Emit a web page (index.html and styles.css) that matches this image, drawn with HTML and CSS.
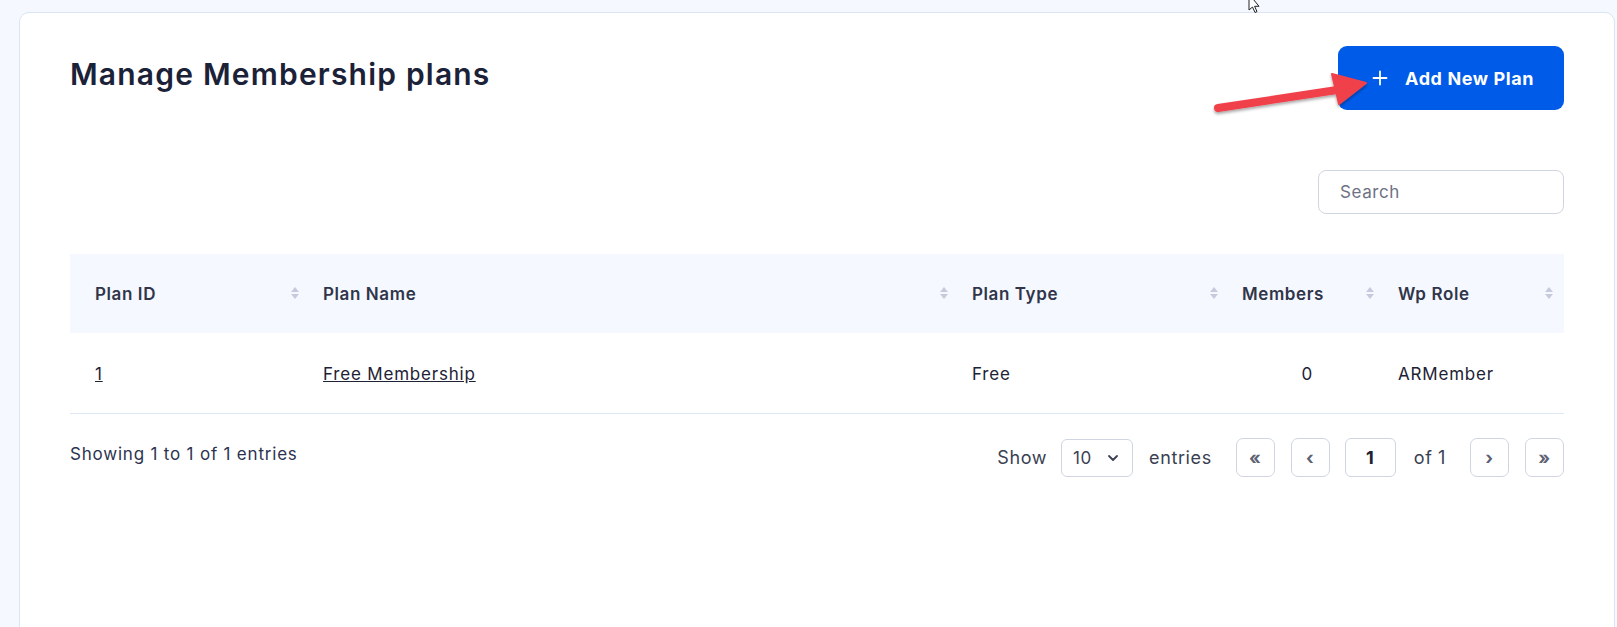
FILE: index.html
```html
<!DOCTYPE html>
<html lang="en">
<head>
    <meta charset="UTF-8">
    <title>Manage Membership plans</title>
    <link rel="stylesheet" href="styles.css">
</head>
<body>
<div class="page">
    <div class="card">
        <!--标题 + 新建按钮-->
        <div class="card_head">
            <h1 class="page_title">Manage Membership plans</h1>
            <button class="btn_add" type="button">
                <svg class="btn_plus" width="16" height="16" viewBox="0 0 16 16"><path d="M8 1.5 V14.5 M1.5 8 H14.5" stroke="#fff" stroke-width="1.8" stroke-linecap="round"/></svg>
                <span>Add New Plan</span>
            </button>
        </div>

        <!--搜索-->
        <div class="search_bar">
            <input type="text" class="search_input" placeholder="Search">
        </div>

        <!--表格-->
        <div class="plan_table">
            <div class="tr th_row">
                <div class="th">Plan ID<i class="sort"></i></div>
                <div class="th">Plan Name<i class="sort"></i></div>
                <div class="th">Plan Type<i class="sort"></i></div>
                <div class="th">Members<i class="sort"></i></div>
                <div class="th">Wp Role<i class="sort"></i></div>
            </div>
            <div class="tr td_row">
                <div class="td"><a href="#">1</a></div>
                <div class="td"><a href="#">Free Membership</a></div>
                <div class="td">Free</div>
                <div class="td td_num">0</div>
                <div class="td">ARMember</div>
            </div>
        </div>

        <!--分页-->
        <div class="table_foot">
            <div class="info">Showing 1 to 1 of 1 entries</div>
            <div class="pager">
                <span>Show</span>
                <div class="page_size">
                    <span>10</span>
                    <svg width="14" height="14" viewBox="0 0 14 14"><path d="M3 5 L7 9 L11 5" fill="none" stroke="#3a3f52" stroke-width="1.8" stroke-linecap="round" stroke-linejoin="round"/></svg>
                </div>
                <span>entries</span>
                <span class="pbtn pbtn_first">&laquo;</span>
                <span class="pbtn">&lsaquo;</span>
                <span class="page_num">1</span>
                <span class="of">of 1</span>
                <span class="pbtn">&rsaquo;</span>
                <span class="pbtn">&raquo;</span>
            </div>
        </div>
    </div>

    <!--红色标注箭头-->
    <svg class="mark_arrow" width="170" height="60" viewBox="0 0 170 60">
        <defs>
            <filter id="sh" x="-20%" y="-50%" width="140%" height="200%">
                <feDropShadow dx="0" dy="2" stdDeviation="1.6" flood-color="#000" flood-opacity="0.35"/>
            </filter>
        </defs>
        <g filter="url(#sh)" fill="#f0414a" stroke="#f0414a">
            <line x1="13" y1="43" x2="132" y2="25" stroke-width="8" stroke-linecap="round"/>
            <polygon points="127,9 134,39 161,18" stroke-width="2" stroke-linejoin="round"/>
        </g>
    </svg>

    <!--鼠标指针-->
    <svg class="cursor" width="14" height="14" viewBox="0 0 14 14">
        <path d="M1 -6 L1 10 L4.5 7 L7 12.5 L9 11.6 L6.6 6.3 L11 6.3 Z" fill="#fff" stroke="#222" stroke-width="1"/>
    </svg>
</div>
</body>
</html>
```
FILE: styles.css
```css
*{
    margin: 0;
    padding: 0;
    box-sizing: border-box;
}
body{
    background-color: #f5f8fe;
    font-family: "Inter", "Noto Sans", sans-serif;
    color: #2c3148;
}
.page{
    position: relative;
    height: 627px;
    overflow: hidden;
    padding: 12px 2px 0 19px;
}
.card{
    background-color: #fff;
    border: 1px solid #dbe4f2;
    border-radius: 10px;
    height: 640px;
    padding: 33px 50px 0 50px;
}
.card_head{
    display: flex;
    justify-content: space-between;
    align-items: flex-start;
}
.page_title{
    margin-top: 10px;
    font-size: 30px;
    font-weight: 600;
    color: #1b2238;
    letter-spacing: 1.2px;
}
.btn_add{
    width: 226px;
    height: 64px;
    border: none;
    border-radius: 9px;
    background-color: #005be9;
    color: #fff;
    font-family: inherit;
    font-size: 18px;
    font-weight: 700;
    letter-spacing: 0.6px;
    display: flex;
    align-items: center;
    padding-left: 34px;
    gap: 17px;
}
.search_bar{
    display: flex;
    justify-content: flex-end;
    margin-top: 60px;
}
.search_input{
    width: 246px;
    height: 44px;
    border: 1px solid #cfd6e1;
    border-radius: 8px;
    padding-left: 21px;
    font-family: inherit;
    font-size: 17px;
    letter-spacing: 0.6px;
    color: #333;
}
.search_input::placeholder{
    color: #6e7284;
}
.plan_table{
    margin-top: 40px;
}
.tr{
    display: grid;
    grid-template-columns: 239px 649px 270px 156px 179px;
}
.th_row{
    background-color: #f5f8fe;
    height: 79px;
}
.td_row{
    height: 81px;
    padding-top: 1px;
    border-bottom: 1px solid #dfe8f6;
}
.th, .td{
    display: flex;
    align-items: center;
    padding-left: 14px;
    font-size: 17px;
}
.th:first-child, .td:first-child{
    padding-left: 25px;
}
.th{
    position: relative;
    font-weight: 600;
    color: #30354a;
    letter-spacing: 0.6px;
}
.td{
    color: #1e2235;
    letter-spacing: 0.8px;
}
.td a{
    color: #1e2235;
}
.td_num{
    justify-content: flex-end;
    padding-right: 71px;
}
/*排序的上下小三角*/
.sort{
    position: absolute;
    right: 10px;
    top: 33px;
    width: 8px;
    height: 12px;
}
.sort::before, .sort::after{
    content: "";
    position: absolute;
    left: 0;
    border-left: 4px solid transparent;
    border-right: 4px solid transparent;
}
.sort::before{
    top: 0;
    border-bottom: 5px solid #c7cadd;
}
.sort::after{
    bottom: 0;
    border-top: 5px solid #c7cadd;
}
.table_foot{
    display: flex;
    justify-content: space-between;
    align-items: center;
    margin-top: 24px;
}
.info{
    font-size: 17px;
    letter-spacing: 0.8px;
    color: #2c3350;
    margin-top: -7px;
}
.pager{
    display: flex;
    align-items: center;
    font-size: 18px;
    letter-spacing: 0.6px;
    color: #3a3f52;
}
.page_size{
    width: 72px;
    height: 38px;
    margin: 0 16px 0 14px;
    border: 1px solid #cfd6e1;
    border-radius: 6px;
    display: flex;
    align-items: center;
    justify-content: space-between;
    padding: 0 12px 0 11px;
    font-size: 17px;
}
.pbtn{
    width: 39px;
    height: 39px;
    border: 1px solid #cfd6e1;
    border-radius: 7px;
    display: flex;
    align-items: center;
    justify-content: center;
    font-size: 18px;
    font-weight: 700;
    color: #5d6273;
    margin-left: 16px;
}
.pbtn_first{
    margin-left: 24px;
}
.page_num{
    width: 51px;
    height: 39px;
    border: 1px solid #cfd6e1;
    border-radius: 6px;
    display: flex;
    align-items: center;
    justify-content: center;
    font-weight: 700;
    color: #1e2235;
    margin-left: 15px;
}
.of{
    margin: 0 8px 0 18px;
}
.mark_arrow{
    position: absolute;
    left: 1205px;
    top: 65px;
}
.cursor{
    position: absolute;
    left: 1248px;
    top: 0;
}
```
